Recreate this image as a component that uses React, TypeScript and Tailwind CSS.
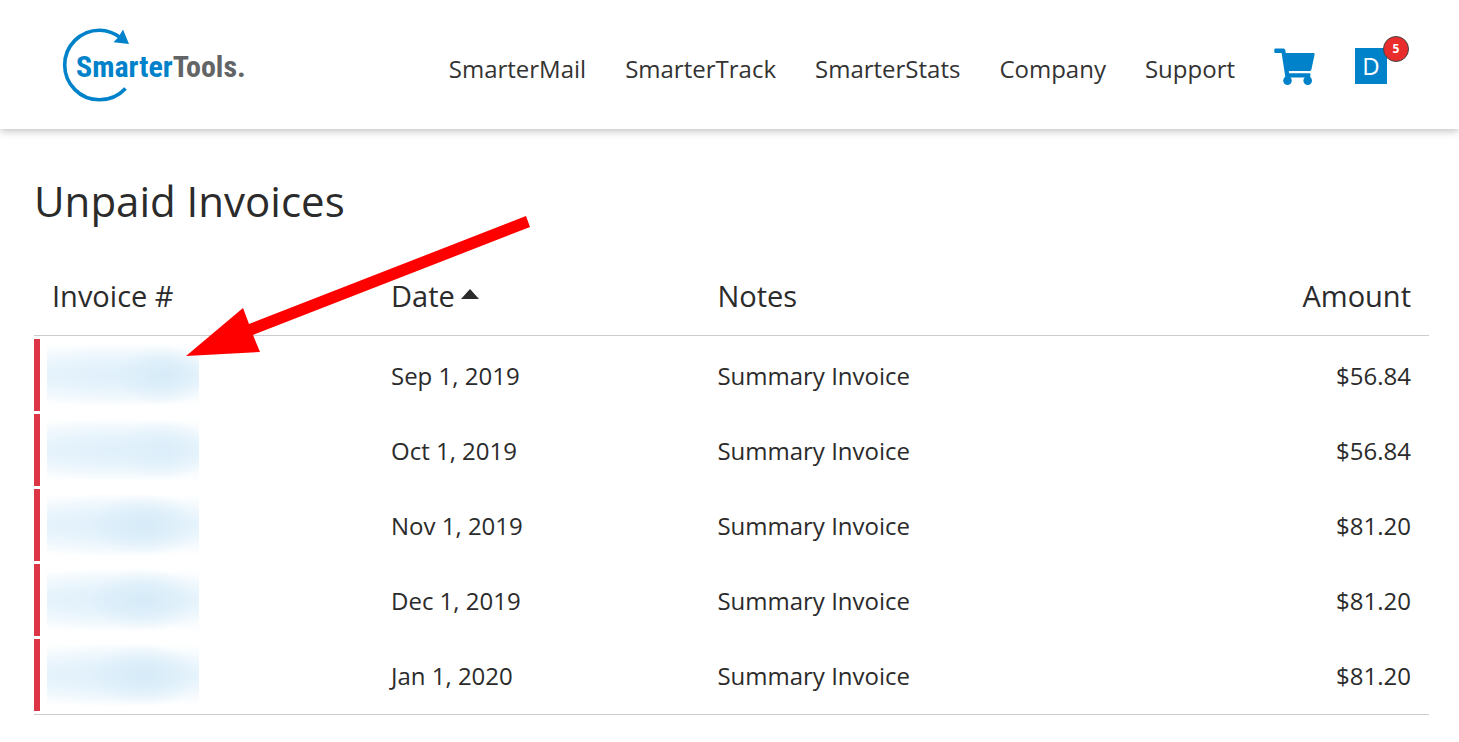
import React, { useState } from "react";

const navItems = ["SmarterMail", "SmarterTrack", "SmarterStats", "Company", "Support"];

const warm = "bg-[radial-gradient(ellipse_30%_48%_at_76%_50%,#d6ebf8_0%,#d6ebf800_100%),radial-gradient(ellipse_75%_50%_at_45%_50%,#e0f0fb_0%,#e0f0fb00_100%),linear-gradient(to_bottom,#e9f5fc00_0%,#e9f5fc_45%,#e9f5fc_55%,#e9f5fc00_100%)]";
const soft = "bg-[radial-gradient(ellipse_30%_48%_at_76%_50%,#dceefa_0%,#dceefa00_100%),radial-gradient(ellipse_75%_50%_at_45%_50%,#e0f0fb_0%,#e0f0fb00_100%),linear-gradient(to_bottom,#e9f5fc00_0%,#e9f5fc_45%,#e9f5fc_55%,#e9f5fc00_100%)]";
const center = "bg-[radial-gradient(ellipse_36%_48%_at_64%_50%,#d6ebf8_0%,#d6ebf800_100%),radial-gradient(ellipse_75%_50%_at_45%_50%,#e0f0fb_0%,#e0f0fb00_100%),linear-gradient(to_bottom,#e9f5fc00_0%,#e9f5fc_45%,#e9f5fc_55%,#e9f5fc00_100%)]";

const invoices = [
  { date: "Sep 1, 2019", notes: "Summary Invoice", amount: 56.84, mask: warm },
  { date: "Oct 1, 2019", notes: "Summary Invoice", amount: 56.84, mask: soft },
  { date: "Nov 1, 2019", notes: "Summary Invoice", amount: 81.2, mask: center },
  { date: "Dec 1, 2019", notes: "Summary Invoice", amount: 81.2, mask: center },
  { date: "Jan 1, 2020", notes: "Summary Invoice", amount: 81.2, mask: center },
];

function Logo() {
  return (
    <svg width="190" height="76" viewBox="0 0 190 76" role="img" aria-label="SmarterTools">
      <path d="M60 11.5C52 5.5 44.5 3.2 37.5 3.2A34.8 34.8 0 0 0 37.5 72.8C47 72.8 56.5 69 63.5 61.5" fill="none" stroke="#0082ca" strokeWidth="3.6" />
      <path d="M61 2.5L67 17L51.5 15.2L56.5 10Z" fill="#0082ca" />
      <text
        x="14"
        y="50"
        fontSize="30"
        fontWeight="700"
        fontFamily="'Roboto Condensed','Liberation Sans Narrow','Liberation Sans',sans-serif"
        fill="#0082ca"
      >
        Smarter<tspan fill="#636466">Tools.</tspan>
      </text>
    </svg>
  );
}

function CartIcon() {
  return (
    <svg width="42" height="38" viewBox="0 0 42 38" fill="#0082ca" aria-hidden="true">
      <path d="M1.5 0.5H9.5Q11 0.5 11.3 2L11.8 5H39.5Q40.9 5 40.6 6.4L37.4 21.5Q37 23 35.5 23H14.8L15.2 25.3H35.5Q36.8 25.3 36.5 26.5L36 29.5H11.4L7.6 5H1.5Q0.3 5 0.3 3.8V1.7Q0.3 0.5 1.5 0.5Z" />
      <circle cx="13.5" cy="32.6" r="4.3" />
      <circle cx="33.7" cy="32.6" r="4.3" />
    </svg>
  );
}

function Header() {
  return (
    <header className="relative flex items-start justify-between bg-white pl-[62px] pr-[50px] h-[129px] shadow-[0_2px_8px_rgba(0,0,0,0.25)]">
      <a href="#home" className="mt-[27px]">
        <Logo />
      </a>
      <div className="flex items-start">
        <nav className="mt-[51px] flex gap-[39px] text-2xl leading-9 text-[#333]">
          {navItems.map((item) => (
            <a key={item} href={"#" + item}>
              {item}
            </a>
          ))}
        </nav>
        <button className="ml-[39px] mt-12" aria-label="Cart">
          <CartIcon />
        </button>
        <button className="relative ml-[39px] mr-[22px] mt-12 h-9 w-8 bg-[#0082ca] text-2xl leading-9 text-white">
          D
          <span className="absolute -right-[22px] -top-3 h-[26px] w-[26px] rounded-full border border-[#444] bg-[#e92c2c] text-center text-xs font-bold leading-6">
            5
          </span>
        </button>
      </div>
    </header>
  );
}

function Arrow() {
  return (
    <svg
      className="pointer-events-none absolute left-[185px] top-[87px]"
      width="346"
      height="142"
      viewBox="0 0 346 142"
      aria-hidden="true"
    >
      <path d="M1 140L58 92L64 108L341 0L345 11L68 119L75 136Z" fill="#f00" />
    </svg>
  );
}

function App() {
  const [ascending, setAscending] = useState(true);
  const rows = ascending ? invoices : [...invoices].reverse();

  return (
    <div className="font-['Open_Sans',sans-serif] text-[#2b2b2b]">
      <Header />
      <main className="relative pl-[34px] pr-[30px] pt-[42px]">
        <h1 className="text-[42px] leading-[60px]">Unpaid Invoices</h1>
        <table className="mt-[23px] w-full table-fixed border-separate border-spacing-x-0 border-spacing-y-[3px] border-b border-[#ccc] text-left">
          <thead className="text-[29px] leading-10">
            <tr>
              <th className="h-[79px] w-[24.3%] border-b border-[#ccc] px-[18px] font-normal">Invoice #</th>
              <th className="w-[23.4%] border-b border-[#ccc] px-[18px] font-normal">
                <button className="flex items-center gap-1.5" onClick={() => setAscending(!ascending)}>
                  Date
                  <svg
                    className={ascending ? "mb-1" : "mb-1 rotate-180"}
                    width="18"
                    height="10"
                    viewBox="0 0 18 10"
                    aria-hidden="true"
                  >
                    <path d="M9 0L18 10H0Z" fill="#2b2b2b" />
                  </svg>
                </button>
              </th>
              <th className="border-b border-[#ccc] px-[18px] font-normal">Notes</th>
              <th className="w-[20%] border-b border-[#ccc] px-[18px] text-right font-normal">Amount</th>
            </tr>
          </thead>
          <tbody className="text-2xl leading-9">
            {rows.map((row) => (
              <tr key={row.date}>
                <td className="h-[72px] border-l-[6px] border-[#dc3545] pl-[7px]">
                  <div className={"h-[64px] w-[152px] " + row.mask} />
                </td>
                <td className="px-[18px] pt-0.5">{row.date}</td>
                <td className="px-[18px] pt-0.5">{row.notes}</td>
                <td className="px-[18px] pt-0.5 text-right">${row.amount.toFixed(2)}</td>
              </tr>
            ))}
          </tbody>
        </table>
        <Arrow />
      </main>
    </div>
  );
}

export default App;
